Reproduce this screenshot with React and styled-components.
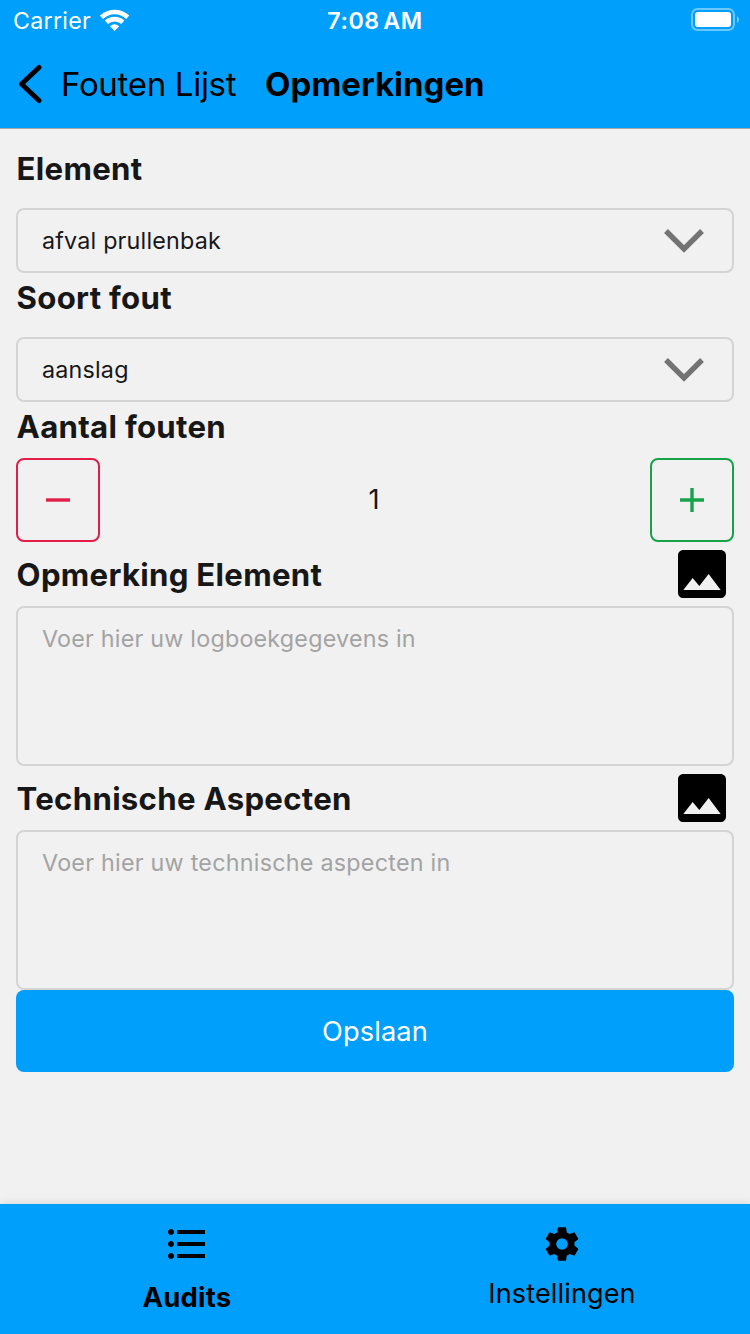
import React from "react";
import styled, { createGlobalStyle } from "styled-components";
import { MdImage, MdFormatListBulleted } from "react-icons/md";

const GlobalStyle = createGlobalStyle`
  * { box-sizing: border-box; }
  body { margin: 0; background: #f1f1f1; }
  button { font: inherit; background: none; border: 0; padding: 0; }
  svg { display: block; flex: none; }
`;

const Screen = styled.div`
  display: flex;
  flex-direction: column;
  width: 750px;
  height: 1334px;
  background: #f1f1f1;
  color: #171717;
  font-family: Inter, "Liberation Sans", sans-serif;
  overflow: hidden;
`;

const Label = styled.span`
  display: block;
  white-space: nowrap;
  font-size: ${(p) => p.$size}px;
  font-weight: ${(p) => p.$weight || 400};
  letter-spacing: ${(p) => p.$spacing || 0}px;
  word-spacing: ${(p) => p.$words || 0}px;
`;

const Header = styled.header`
  flex: none;
  height: 129px;
  background: #009ffc;
  border-bottom: 1px solid #a5a8aa;
`;

const StatusBar = styled.div`
  display: grid;
  grid-template-columns: 1fr auto 1fr;
  align-items: center;
  height: 40px;
  padding: 0 11px 0 13px;
  color: #fff;
  line-height: 30px;

  ${Label} {
    padding-top: 2px;
  }
`;

const Time = styled.div`
  padding-right: 2px;
`;

const Carrier = styled.div`
  display: flex;
  align-items: center;
  gap: 9px;
`;

const Battery = styled.svg`
  justify-self: end;
`;

const NavBar = styled.nav`
  display: flex;
  align-items: center;
  height: 88px;
  padding-left: 18px;
  color: #000;
`;

const BackButton = styled.button`
  display: flex;
  align-items: center;
  gap: 19px;
  width: 247px;
  color: #000;
`;

const Form = styled.main`
  flex: 1;
  display: flex;
  flex-direction: column;
  padding: 15px 16px 0;
`;

const FieldHeading = styled.div`
  display: flex;
  justify-content: space-between;
  align-items: flex-start;
  flex: none;
  height: ${(p) => p.$height || 64}px;
  padding-left: 0.6px;
  line-height: ${(p) => p.$line || 50}px;
`;

const SelectBox = styled.button`
  display: flex;
  align-items: center;
  justify-content: space-between;
  flex: none;
  height: 65px;
  padding: 0 28px 0 24px;
  border: 2px solid #d4d4d4;
  border-radius: 8px;
  color: #171717;
`;

const Counter = styled.div`
  display: flex;
  align-items: center;
  justify-content: space-between;
  height: 84px;
`;

const Count = styled.output`
  padding: 0 2px 2px 0;
`;

const StepButton = styled.button`
  display: grid;
  place-items: center;
  width: 84px;
  height: 84px;
  border: 2px solid ${(p) => p.$color};
  border-radius: 8px;
  color: ${(p) => p.$color};
`;

const ImageButton = styled.button`
  display: block;
  color: #000;
`;

const NoteBox = styled.div`
  flex: none;
  height: 160px;
  padding: 16px 24px;
  border: 2px solid #d4d4d4;
  border-radius: 8px;
  color: #a3a3a3;
  line-height: 30px;
`;

const SaveButton = styled.button`
  display: grid;
  place-items: center;
  flex: none;
  height: 82px;
  border-radius: 8px;
  background: #009ffc;
  color: #fff;
`;

const TabBar = styled.footer`
  display: flex;
  flex: none;
  height: 130px;
  background: #009ffc;
  box-shadow: 0 0 9px rgba(0, 0, 0, 0.13);
`;

const Tab = styled.button`
  display: flex;
  flex-direction: column;
  align-items: center;
  justify-content: flex-start;
  flex: 1;
  gap: ${(p) => p.$gap}px;
  padding: 16px 1px 0 0;
  color: #000;
  line-height: 34px;
`;

const IconSlot = styled.span`
  display: grid;
  place-items: center;
  width: 48px;
  height: 48px;
`;

const Wifi = () => (
  <svg width="30" height="23" viewBox="0 0 30 23" fill="none" stroke="#fff" strokeWidth="4.6">
    <path d="M1.5 8.3Q7.2 3 14.6 3T27.7 8.3" />
    <path d="M6.4 13.2Q9.8 10.1 14.6 10.1T22.8 13.2" />
    <path d="M10 17.3Q14.6 13.2 19.2 17.3L14.6 22Z" fill="#fff" stroke="none" />
  </svg>
);

const Chevron = () => (
  <svg width="40" height="26" viewBox="0 0 40 26" fill="none" stroke="#737373" strokeWidth="5.4">
    <path d="M2 3L20 21L38 3" />
  </svg>
);

const Cog = () => (
  <svg width="40" height="40" viewBox="0 0 24 24" fill="currentColor">
    <path d="M12 15.5A3.5 3.5 0 0 1 8.5 12 3.5 3.5 0 0 1 12 8.5 3.5 3.5 0 0 1 15.5 12 3.5 3.5 0 0 1 12 15.5M19.43 12.97C19.47 12.65 19.5 12.33 19.5 12S19.47 11.34 19.43 11L21.54 9.37C21.73 9.22 21.78 8.95 21.66 8.73L19.66 5.27C19.54 5.05 19.27 4.96 19.05 5.05L16.56 6.05C16.04 5.66 15.5 5.32 14.87 5.07L14.5 2.42C14.46 2.18 14.25 2 14 2H10C9.75 2 9.54 2.18 9.5 2.42L9.13 5.07C8.5 5.32 7.96 5.66 7.44 6.05L4.95 5.05C4.73 4.96 4.46 5.05 4.34 5.27L2.34 8.73C2.21 8.95 2.27 9.22 2.46 9.37L4.57 11C4.53 11.34 4.5 11.67 4.5 12S4.53 12.65 4.57 12.97L2.46 14.63C2.27 14.78 2.21 15.05 2.34 15.27L4.34 18.73C4.46 18.95 4.73 19.03 4.95 18.95L7.44 17.94C7.96 18.34 8.5 18.68 9.13 18.93L9.5 21.58C9.54 21.82 9.75 22 10 22H14C14.25 22 14.46 21.82 14.5 21.58L14.87 18.93C15.5 18.67 16.04 18.34 16.56 17.94L19.05 18.95C19.27 19.03 19.54 18.95 19.66 18.73L21.66 15.27C21.78 15.05 21.73 14.78 21.54 14.63Z" />
  </svg>
);

const StepIcon = ({ plus }) => (
  <svg width="24" height="24" viewBox="0 0 24 24" stroke="currentColor" strokeWidth="3.4">
    <path d={plus ? "M0 12H24M12 0V24" : "M0 12H24"} />
  </svg>
);

const Heading = ({ children }) => (
  <Label $size={31.2} $weight={700} $spacing={0.28}>{children}</Label>
);

const PickImage = () => (
  <ImageButton aria-label="Foto">
    <MdImage size={64} />
  </ImageButton>
);

export default function App() {
  return (
    <Screen>
      <GlobalStyle />
      <Header>
        <StatusBar>
          <Carrier>
            <Label $size={23.2} $spacing={0.3}>Carrier</Label>
            <Wifi />
          </Carrier>
          <Time>
            <Label $size={23.2} $weight={600} $spacing={0.6} $words={-3}>7:08 AM</Label>
          </Time>
          <Battery width="48" height="24" viewBox="0 0 48 24">
            <rect x="1" y="1" width="42" height="21" rx="5.5" fill="none" stroke="#fff" strokeOpacity=".42" strokeWidth="2" />
            <rect x="4" y="4" width="36" height="15" rx="3" fill="#fff" />
            <path d="M46 8Q48 9.5 48 11.5T46 15Z" fill="#fff" fillOpacity=".5" />
          </Battery>
        </StatusBar>
        <NavBar>
          <BackButton>
            <svg width="24" height="40" viewBox="0 0 24 40" fill="none" stroke="currentColor" strokeWidth="5" strokeLinecap="round" strokeLinejoin="round">
              <path d="M21 3.5L3.5 20L21 36.5" />
            </svg>
            <Label $size={33} $spacing={-0.3}>Fouten Lijst</Label>
          </BackButton>
          <Label $size={33} $weight={700}>Opmerkingen</Label>
        </NavBar>
      </Header>

      <Form>
        <FieldHeading><Heading>Element</Heading></FieldHeading>
        <SelectBox>
          <Label $size={23.3} $spacing={0.2}>afval prullenbak</Label>
          <Chevron />
        </SelectBox>

        <FieldHeading><Heading>Soort fout</Heading></FieldHeading>
        <SelectBox>
          <Label $size={23.3} $spacing={0.2}>aanslag</Label>
          <Chevron />
        </SelectBox>

        <FieldHeading $height={56}><Heading>Aantal fouten</Heading></FieldHeading>
        <Counter>
          <StepButton $color="#e11d48"><StepIcon /></StepButton>
          <Count><Label $size={27.2}>1</Label></Count>
          <StepButton $color="#16a34a"><StepIcon plus /></StepButton>
        </Counter>

        <FieldHeading $line={66}><Heading>Opmerking Element</Heading><PickImage /></FieldHeading>
        <NoteBox><Label $size={23.3} $spacing={0.22}>Voer hier uw logboekgegevens in</Label></NoteBox>

        <FieldHeading $line={66}><Heading>Technische Aspecten</Heading><PickImage /></FieldHeading>
        <NoteBox><Label $size={23.3} $spacing={0.25}>Voer hier uw technische aspecten in</Label></NoteBox>

        <SaveButton><Label $size={27.2} $spacing={0.15}>Opslaan</Label></SaveButton>
      </Form>

      <TabBar>
        <Tab $gap={12}>
          <IconSlot><MdFormatListBulleted size={48} /></IconSlot>
          <Label $size={27.5} $weight={700} $spacing={0.2}>Audits</Label>
        </Tab>
        <Tab $gap={9}>
          <IconSlot><Cog /></IconSlot>
          <Label $size={27} $spacing={0.15}>Instellingen</Label>
        </Tab>
      </TabBar>
    </Screen>
  );
}
